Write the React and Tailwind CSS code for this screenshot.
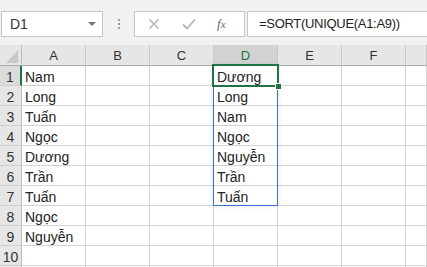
import React from "react";

const colA = ["Nam", "Long", "Tuấn", "Ngọc", "Dương", "Trần", "Tuấn", "Ngọc", "Nguyễn", ""];
const colD = ["Dương", "Long", "Nam", "Ngọc", "Nguyễn", "Trần", "Tuấn", "", "", ""];
const cols = ["A", "B", "C", "D", "E", "F", ""];

export default function App() {
  return (
    <div className="w-[427px] h-[267px] overflow-hidden bg-white text-[#222]" style={{ fontFamily: '"Liberation Sans", Arial, sans-serif' }}>
      {/* Formula bar */}
      <div className="h-[45px] bg-[#f1f1f1] flex items-start pt-[11px]">
        <div className="ml-[1px] w-[102px] h-[26px] bg-white border border-[#c6c6c6] flex items-center pl-[8px] pr-[6px]">
          <span className="text-[14px] text-[#333] flex-1">D1</span>
          <span className="w-0 h-0 border-l-[4px] border-r-[4px] border-t-[4px] border-l-transparent border-r-transparent border-t-[#777]" />
        </div>
        <div className="w-[31px] h-[26px] flex flex-col items-center justify-center gap-[2px]">
          <span className="w-[2px] h-[2px] bg-[#9a9a9a]" />
          <span className="w-[2px] h-[2px] bg-[#9a9a9a]" />
          <span className="w-[2px] h-[2px] bg-[#9a9a9a]" />
        </div>
        <div className="w-[111px] h-[26px] bg-white border border-[#c6c6c6] flex items-center">
          <svg width="12" height="12" viewBox="0 0 12 12" className="ml-[13px]">
            <path d="M1.5 1.5 L10.5 10.5 M10.5 1.5 L1.5 10.5" stroke="#b4b4b4" strokeWidth="1.5" />
          </svg>
          <svg width="14" height="12" viewBox="0 0 14 12" className="ml-[22px]">
            <path d="M1 6.5 L5 10.5 L13 1.5" stroke="#b4b4b4" strokeWidth="1.8" fill="none" />
          </svg>
          <span className="ml-[21px] text-[13px] italic text-[#666]" style={{ fontFamily: '"Liberation Serif", serif' }}>
            f<span className="text-[11px]">x</span>
          </span>
        </div>
        <div className="ml-[2px] flex-1 h-[26px] bg-white border border-[#c6c6c6] border-r-0 flex items-center pl-[11px]">
          <span className="text-[13px] tracking-[-0.3px] text-[#222]">=SORT(UNIQUE(A1:A9))</span>
        </div>
      </div>

      {/* Sheet grid */}
      <div className="relative">
        <div className="grid grid-cols-[22px_repeat(6,64px)_1fr] grid-rows-[21px_repeat(11,20px)]">
          {/* corner */}
          <div className="bg-[#e6e6e6] border-r border-b border-r-[#bdbdbd] border-b-[#ababab] flex items-end justify-end pr-[3px] pb-[2px]">
            <svg width="12" height="13" viewBox="0 0 12 13">
              <polygon points="12,0 12,13 0,13" fill="#c9c9c9" />
            </svg>
          </div>
          {cols.map((c, i) =>
            c === "D" ? (
              <div key={i} className="bg-[#d3d3d3] border-r border-r-[#c8c8c8] border-b-2 border-b-[#217346] text-[13px] text-[#217346] text-center leading-[20px] pt-[1px]">
                {c}
              </div>
            ) : (
              <div key={i} className="bg-[#e6e6e6] border-r border-b border-r-[#c8c8c8] border-b-[#ababab] text-[13px] text-[#333] text-center leading-[20px] pt-[1px]">
                {c}
              </div>
            )
          )}
          {Array.from({ length: 11 }).map((_, r) => (
            <React.Fragment key={r}>
              <div
                className={`border-b border-b-[#cfcfcf] text-[14px] text-[#333] text-center leading-[18px] pt-[2px] ${
                  r === 0 ? "bg-[#dcdcdc] border-r-2 border-r-[#217346]" : "bg-[#e6e6e6] border-r border-r-[#bdbdbd]"
                }`}
              >
                {r < 10 ? r + 1 : ""}
              </div>
              {cols.map((c, ci) => (
                <div key={ci} className="border-r border-b border-[#d4d4d4] text-[14px] leading-[18px] pt-[2px] pl-[3px] whitespace-nowrap">
                  {r < 10 && ci === 0 ? colA[r] : r < 10 && ci === 3 ? colD[r] : ""}
                </div>
              ))}
            </React.Fragment>
          ))}
        </div>

        {/* spill range outline */}
        <div className="absolute left-[213px] top-[20px] w-[65px] h-[141px] border border-[#3c6fd0] shadow-[0_0_6px_rgba(0,0,0,0.1)] pointer-events-none" />
        {/* active cell */}
        <div className="absolute left-[212px] top-[19px] w-[67px] h-[23px] border-2 border-[#217346] pointer-events-none" />
        <div className="absolute left-[275px] top-[38px] w-[7px] h-[7px] bg-[#217346] border border-white pointer-events-none" />
      </div>
    </div>
  );
}
